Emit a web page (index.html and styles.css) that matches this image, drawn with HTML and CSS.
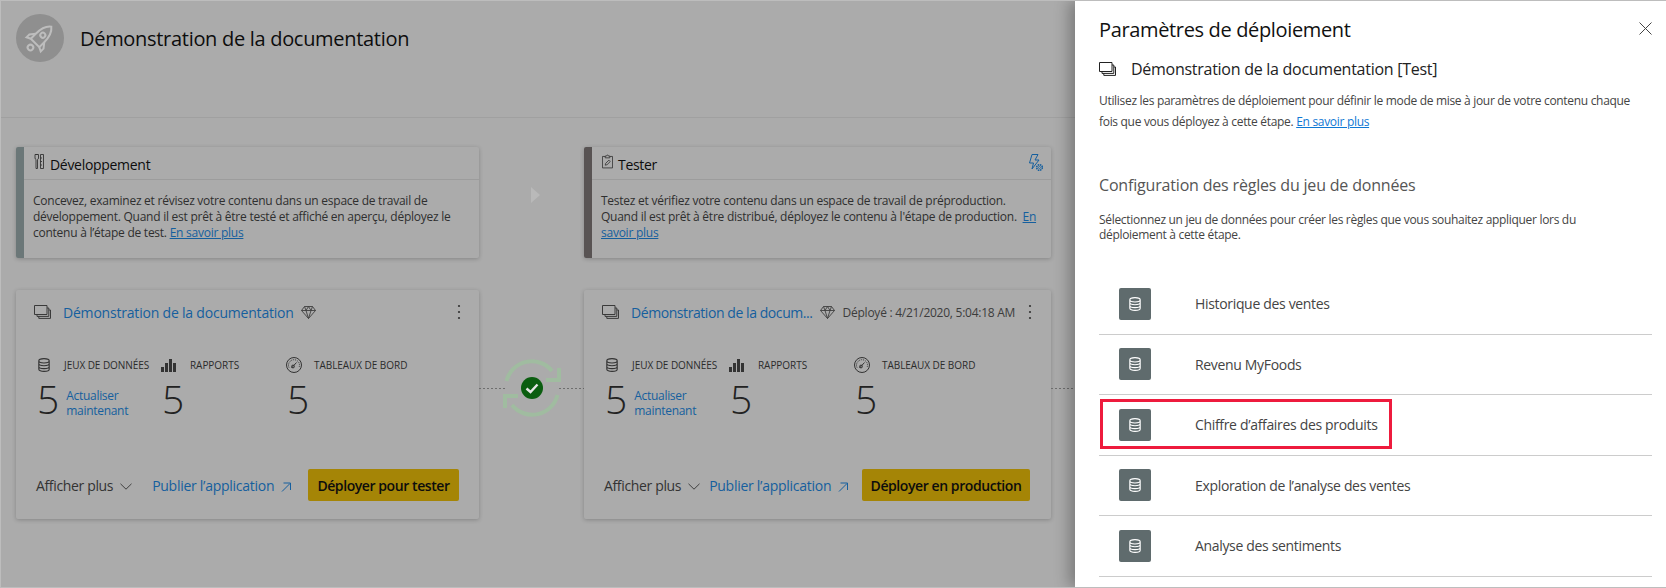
FILE: index.html
```html
<!DOCTYPE html>
<html lang="fr">
<head>
    <meta charset="UTF-8">
    <meta name="viewport" content="width=device-width, initial-scale=1.0">
    <title>Paramètres de déploiement</title>
    <link rel="stylesheet" href="styles.css">
</head>
<body>
    <svg class="sprites" width="0" height="0">
        <symbol id="i-workspace" viewBox="0 0 17 14">
            <path d="M.5.5h12.5v9H.5z M13 3h1.8v8.4H3V9.5 M14.8 5h1.7v8.4H4.8v-2" fill="none" stroke="currentColor"/>
        </symbol>
        <symbol id="i-db" viewBox="0 0 12 14">
            <path d="M.8 2.800C.8 1.500 3 .6 6 .6s5.200.9 5.200 2.200v8.400c0 1.300-2.200 2.200-5.200 2.200S.8 12.500.8 11.200z M.8 2.800C.8 4.100 3 5 6 5s5.200-.9 5.200-2.200 M.8 5.600C.8 6.900 3 7.800 6 7.800s5.200-.9 5.200-2.200 M.8 8.400C.8 9.700 3 10.600 6 10.600s5.200-.9 5.200-2.200" fill="none" stroke="currentColor" stroke-width="1.100"/>
        </symbol>
        <symbol id="i-bars" viewBox="0 0 15 13">
            <path d="M0 8h3v5H0z M4 4h3v9H4z M8 0h3v13H8z M12 4h3v9h-3z" fill="currentColor"/>
        </symbol>
        <symbol id="i-gauge" viewBox="0 0 16 16">
            <circle cx="8" cy="8" r="7.500" fill="none" stroke="currentColor"/>
            <path d="M3 10.500A5.500 5.500 0 1 1 13 10.500" fill="none" stroke="currentColor" stroke-dasharray="1 1"/>
            <path d="M5.500 11L10.500 5.500" stroke="currentColor" fill="none"/>
            <circle cx="7" cy="9.500" r="1.400" fill="none" stroke="currentColor"/>
        </symbol>
        <symbol id="i-gem" viewBox="0 0 15 13">
            <path d="M3.500.5h8l3 4-7 8-7-8z M.5 4.500h14 M5 4.500l2.500 8 2.500-8 M3.500.5L5 4.500 7.500.5 10 4.500 11.500.5" fill="none" stroke="currentColor" stroke-width=".9"/>
        </symbol>
        <symbol id="i-kebab" viewBox="0 0 4 16">
            <circle cx="2" cy="2" r="1.100" fill="currentColor"/>
            <circle cx="2" cy="8" r="1.100" fill="currentColor"/>
            <circle cx="2" cy="14" r="1.100" fill="currentColor"/>
        </symbol>
        <symbol id="i-chevron" viewBox="0 0 12 7">
            <path d="M.5.8L6 6.200 11.500.8" fill="none" stroke="currentColor"/>
        </symbol>
        <symbol id="i-open" viewBox="0 0 10 10">
            <path d="M1 9.500L9 1.500 M2.500 1H9.500V8" fill="none" stroke="currentColor"/>
        </symbol>
        <symbol id="i-sync" viewBox="0 0 54 54" overflow="visible">
            <g fill="none" stroke="#a0bca0" stroke-width="4">
                <path d="M1.500 20A26 26 0 0 1 47 10"/>
                <path d="M41 19H54V7"/>
                <path d="M52.500 34A26 26 0 0 1 7 44"/>
                <path d="M13 35H0V47"/>
            </g>
            <circle cx="27" cy="27" r="11" fill="#0b5e10"/>
            <path d="M21.500 27.500l4 3.500 7-7.500" fill="none" stroke="#e6e6e6" stroke-width="2.400"/>
        </symbol>
    </svg>

    <div class="app">
        <main class="pipeline">
            <header class="pipeline-head">
                <div class="logo">
                    <svg width="48" height="48" viewBox="0 0 48 48">
                        <g transform="rotate(45 24 24)" fill="none" stroke="#bdbdbd" stroke-width="2">
                            <path d="M24 8c4.500 3.500 6 10 6 16v7H18v-7c0-6 1.500-12.500 6-16z"/>
                            <circle cx="24" cy="20" r="2.500"/>
                            <path d="M18 24l-4 5v4l4-2 M30 24l4 5v4l-4-2"/>
                            <circle cx="24" cy="37.500" r="2.800"/>
                        </g>
                    </svg>
                </div>
                <h1>Démonstration de la documentation</h1>
            </header>

            <div class="stages">
                <section class="stage stage-dev">
                    <div class="stage-head">
                        <svg class="stage-icon" width="10" height="15" viewBox="0 0 10 15">
                            <path d="M1 .5v3.500c0 .8.500 1.300 1 1.500v9h1.500v-9c.5-.2 1-.7 1-1.500V.5z M1.500 .5h2.500 M6.500 .5h3v14h-3z M6.500 4h1.500 M6.500 7.500h1.500 M6.500 11h1.500" fill="none" stroke="currentColor" stroke-width=".9"/>
                        </svg>
                        <h2>Développement</h2>
                    </div>
                    <p class="stage-text">Concevez, examinez et révisez votre contenu dans un espace de travail de<br>développement. Quand il est prêt à être testé et affiché en aperçu, déployez le<br>contenu à l’étape de test. <a href="#">En savoir plus</a></p>
                </section>

                <div class="step-arrow"></div>

                <section class="stage stage-test">
                    <div class="stage-head">
                        <svg class="stage-icon" width="11" height="15" viewBox="0 0 12 15">
                            <path d="M3.500 2H.5v12.500h11V2h-3 M3.500 3.500V1.500h1.500a1 1 0 0 1 2 0h1.500v2z M3.500 11.500l.5-2 3.500-3.500 1.500 1.500L5.500 11z" fill="none" stroke="currentColor" stroke-width=".9"/>
                        </svg>
                        <h2>Tester</h2>
                        <svg class="rules-icon" width="16" height="18" viewBox="0 0 16 18">
                            <path d="M5 .5h6L8 6h4L5 15l1.500-6H2.500z" fill="none" stroke="currentColor"/>
                            <circle cx="12.500" cy="13.500" r="2.800" fill="#ababab" stroke="currentColor" stroke-width="1.600" stroke-dasharray="1.500 .7"/>
                            <circle cx="12.500" cy="13.500" r="1" fill="none" stroke="currentColor" stroke-width=".7"/>
                        </svg>
                    </div>
                    <p class="stage-text">Testez et vérifiez votre contenu dans un espace de travail de préproduction.<br>Quand il est prêt à être distribué, déployez le contenu à l'étape de production. &nbsp;<a href="#">En<br>savoir plus</a></p>
                </section>

                <div class="stage-gap"></div>

                <section class="card">
                    <div class="card-head">
                        <svg class="ws-icon" width="17" height="14"><use href="#i-workspace"/></svg>
                        <a class="card-title" href="#">Démonstration de la documentation</a>
                        <svg class="gem" width="15" height="13"><use href="#i-gem"/></svg>
                        <svg class="kebab" width="4" height="16"><use href="#i-kebab"/></svg>
                    </div>
                    <div class="stats">
                        <div class="stat">
                            <div class="stat-label"><span class="stat-icon"><svg width="12" height="14"><use href="#i-db"/></svg></span>JEUX DE DONNÉES</div>
                            <div class="stat-value first">5<a href="#">Actualiser<br>maintenant</a></div>
                        </div>
                        <div class="stat">
                            <div class="stat-label"><span class="stat-icon wide"><svg width="15" height="13"><use href="#i-bars"/></svg></span>RAPPORTS</div>
                            <div class="stat-value">5</div>
                        </div>
                        <div class="stat">
                            <div class="stat-label"><span class="stat-icon mid"><svg width="16" height="16"><use href="#i-gauge"/></svg></span>TABLEAUX DE BORD</div>
                            <div class="stat-value">5</div>
                        </div>
                    </div>
                    <div class="card-foot">
                        <span class="more">Afficher plus<svg width="12" height="7"><use href="#i-chevron"/></svg></span>
                        <a class="publish" href="#">Publier l’application<svg width="10" height="10"><use href="#i-open"/></svg></a>
                        <button class="deploy">Déployer pour tester</button>
                    </div>
                </section>

                <div class="connector">
                    <span class="dots"></span>
                    <svg class="sync" width="54" height="54"><use href="#i-sync"/></svg>
                    <span class="dots"></span>
                </div>

                <section class="card card-test">
                    <div class="card-head">
                        <svg class="ws-icon" width="17" height="14"><use href="#i-workspace"/></svg>
                        <a class="card-title" href="#">Démonstration de la docum...</a>
                        <svg class="gem" width="15" height="13"><use href="#i-gem"/></svg>
                        <span class="deployed">Déployé : 4/21/2020, 5:04:18 AM</span>
                        <svg class="kebab" width="4" height="16"><use href="#i-kebab"/></svg>
                    </div>
                    <div class="stats">
                        <div class="stat">
                            <div class="stat-label"><span class="stat-icon"><svg width="12" height="14"><use href="#i-db"/></svg></span>JEUX DE DONNÉES</div>
                            <div class="stat-value first">5<a href="#">Actualiser<br>maintenant</a></div>
                        </div>
                        <div class="stat">
                            <div class="stat-label"><span class="stat-icon wide"><svg width="15" height="13"><use href="#i-bars"/></svg></span>RAPPORTS</div>
                            <div class="stat-value">5</div>
                        </div>
                        <div class="stat">
                            <div class="stat-label"><span class="stat-icon mid"><svg width="16" height="16"><use href="#i-gauge"/></svg></span>TABLEAUX DE BORD</div>
                            <div class="stat-value">5</div>
                        </div>
                    </div>
                    <div class="card-foot">
                        <span class="more">Afficher plus<svg width="12" height="7"><use href="#i-chevron"/></svg></span>
                        <a class="publish" href="#">Publier l’application<svg width="10" height="10"><use href="#i-open"/></svg></a>
                        <button class="deploy">Déployer en production</button>
                    </div>
                </section>

                <div class="connector tail"><span class="dots"></span></div>
            </div>
        </main>

        <aside class="panel">
            <div class="panel-head">
                <h2>Paramètres de déploiement</h2>
                <svg class="close" width="13" height="13" viewBox="0 0 13 13"><path d="M.5.5l12 12 M12.500.5l-12 12" stroke="currentColor" fill="none"/></svg>
            </div>
            <div class="panel-ws">
                <svg width="17" height="14"><use href="#i-workspace"/></svg>
                <span>Démonstration de la documentation [Test]</span>
            </div>
            <p class="panel-desc">Utilisez les paramètres de déploiement pour définir le mode de mise à jour de votre contenu chaque<br>fois que vous déployez à cette étape. <a href="#">En savoir plus</a></p>
            <h3>Configuration des règles du jeu de données</h3>
            <p class="panel-hint">Sélectionnez un jeu de données pour créer les règles que vous souhaitez appliquer lors du<br>déploiement à cette étape.</p>
            <ul class="datasets">
                <li><span class="ds-icon"><svg width="12" height="14"><use href="#i-db"/></svg></span>Historique des ventes</li>
                <li><span class="ds-icon"><svg width="12" height="14"><use href="#i-db"/></svg></span>Revenu MyFoods</li>
                <li class="marked"><span class="ds-icon"><svg width="12" height="14"><use href="#i-db"/></svg></span>Chiffre d’affaires des produits<span class="callout"></span></li>
                <li><span class="ds-icon"><svg width="12" height="14"><use href="#i-db"/></svg></span>Exploration de l’analyse des ventes</li>
                <li><span class="ds-icon"><svg width="12" height="14"><use href="#i-db"/></svg></span>Analyse des sentiments</li>
            </ul>
        </aside>
    </div>
</body>
</html>
```

FILE: styles.css
```css
* {
    box-sizing: border-box;
}
body {
    margin: 0;
    font-family: "Open Sans", "Noto Sans", sans-serif;
    color: #2b2b2b;
}
a {
    color: #155f9e;
    text-decoration: none;
}
h1, h2, h3, p, ul {
    margin: 0;
    padding: 0;
}
.sprites {
    position: absolute;
}
.app {
    display: flex;
    width: 1666px;
    height: 588px;
    overflow: hidden;
    background: #ababab;
    border: solid #bdbdbd;
    border-width: 1px 0 1px 1px;
}

/* left side, dimmed */
.pipeline {
    width: 1074px;
    flex: none;
    padding-left: 15px;
}
.pipeline-head {
    display: flex;
    align-items: flex-start;
    gap: 16px;
    height: 117px;
    margin-left: -15px;
    padding: 13px 0 0 15px;
    border-bottom: 1px solid #a0a0a0;
}
.logo {
    width: 48px;
    height: 48px;
    border-radius: 50%;
    background: #8f8f8f;
}
.pipeline-head h1 {
    font-size: 20px;
    font-weight: 400;
    line-height: 50px;
    color: #0d0d0d;
    letter-spacing: -0.3px;
}
.stages {
    display: grid;
    grid-template-columns: 463px 105px 467px 24px;
    grid-template-rows: 111px 229px;
    row-gap: 32px;
    margin-top: 29px;
}
.stage {
    border-left: 8px solid #6b7778;
    border-radius: 2px;
    box-shadow: 0 1px 4px rgba(0, 0, 0, .22);
}
.stage-test {
    border-left-color: #585353;
}
.stage-head {
    display: flex;
    align-items: center;
    height: 33px;
    padding: 0 8px 0 10px;
    border-bottom: 1px solid #9c9c9c;
}
.stage-head h2 {
    margin: 2px 0 0 6px;
    font-size: 14px;
    font-weight: 400;
    color: #0d0d0d;
    letter-spacing: -0.3px;
}
.stage-test .stage-head h2 {
    margin-left: 5px;
}
.stage-icon {
    margin-top: -3px;
    color: #333;
}
.rules-icon {
    margin-left: auto;
    color: #155f9e;
}
.stage-text {
    padding: 13px 0 0 9px;
    font-size: 12px;
    line-height: 16px;
    color: #2f2f2f;
    letter-spacing: -0.25px;
    white-space: nowrap;
}
.stage-text a {
    text-decoration: underline;
}
.step-arrow {
    align-self: start;
    justify-self: center;
    width: 0;
    height: 0;
    margin: 40px 0 0 8px;
    border-left: 9px solid #b9b9b9;
    border-top: 8px solid transparent;
    border-bottom: 8px solid transparent;
}
.card {
    display: flex;
    flex-direction: column;
    padding: 14px 20px 18px 18px;
    border-radius: 2px;
    box-shadow: 0 1px 4px rgba(0, 0, 0, .22);
}
.card-test {
    padding-right: 21px;
}
.card-head {
    display: flex;
    align-items: center;
    height: 16px;
}
.ws-icon {
    margin-top: -1px;
    color: #3a3a3a;
    margin-right: 12px;
}
.card-title {
    font-size: 14px;
    font-weight: 400;
    white-space: nowrap;
    letter-spacing: -0.2px;
}
.card-test .card-title {
    letter-spacing: -0.43px;
}
.gem {
    margin-left: 7px;
    color: #3f3f3f;
}
.kebab {
    margin-left: auto;
    margin-right: -2px;
    color: #333;
}
.deployed {
    margin-left: 8px;
    font-size: 12px;
    color: #3c3c3c;
    white-space: nowrap;
    letter-spacing: -0.25px;
}
.stats {
    display: grid;
    grid-template-columns: 123px 125px 1fr;
    margin: 37px 0 0 4px;
}
.stat-label {
    display: flex;
    align-items: center;
    height: 16px;
    font-size: 10px;
    white-space: nowrap;
    color: #2b2b2b;
    letter-spacing: -0.05px;
}
.stat-icon {
    display: flex;
    width: 26px;
    color: #333;
}
.stat-icon.wide {
    width: 29px;
}
.stat-icon.mid {
    width: 28px;
}
.stat-value {
    display: flex;
    margin: 4px 0 0 1px;
    font-size: 39px;
    font-weight: 300;
    line-height: 44px;
    color: #222;
}
.stat-value.first {
    margin-left: -1px;
}
.stat-value a {
    margin: 11px 0 0 7px;
    font-size: 12px;
    font-weight: 400;
    line-height: 15px;
    letter-spacing: -0.3px;
}
.card-foot {
    display: flex;
    align-items: center;
    margin: auto 0 0 2px;
}
.more {
    font-size: 14px;
    color: #333;
    letter-spacing: -0.35px;
}
.more svg {
    margin-left: 7px;
    vertical-align: 1px;
    color: #3f3f3f;
}
.publish {
    margin-left: 20px;
    font-size: 14px;
    letter-spacing: -0.27px;
}
.card-test .publish {
    margin-left: 9px;
}
.publish svg {
    margin-left: 7px;
    vertical-align: -1px;
}
.deploy {
    margin-left: auto;
    width: 151px;
    height: 32px;
    padding: 0;
    border: none;
    border-radius: 2px;
    background: #a58506;
    color: #0d0d0d;
    font-family: inherit;
    font-size: 14px;
    font-weight: 600;
    letter-spacing: -0.42px;
    white-space: nowrap;
}
.card-test .deploy {
    width: 168px;
}
.connector {
    display: flex;
    align-items: center;
    align-self: start;
    height: 54px;
    margin-top: 71px;
}
.sync {
    overflow: visible;
}
.dots {
    flex: 1;
    height: 1px;
    background: linear-gradient(90deg, #6e6e6e 2px, transparent 2px) 0 0 / 4px 1px;
}

/* settings panel */
.panel {
    position: relative;
    flex: 1;
    padding: 14px 14px 0 24px;
    background: #fff;
    box-shadow: -6px 0 14px rgba(0, 0, 0, .28);
}
.panel-head {
    display: flex;
    align-items: center;
    justify-content: space-between;
    height: 28px;
}
.panel-head h2 {
    font-size: 20px;
    font-weight: 500;
    color: #111;
    letter-spacing: -0.35px;
}
.close {
    margin-top: -2px;
    color: #444;
}
.panel-ws {
    display: flex;
    align-items: center;
    gap: 15px;
    height: 24px;
    margin-top: 14px;
    font-size: 16px;
    color: #222;
    letter-spacing: -0.27px;
}
.panel-desc {
    margin-top: 9px;
    font-size: 12px;
    line-height: 21px;
    color: #444;
    letter-spacing: -0.31px;
}
.panel-desc a {
    color: #0f78d4;
    text-decoration: underline;
}
.panel h3 {
    margin-top: 41px;
    font-size: 16px;
    font-weight: 400;
    line-height: 24px;
    color: #555;
    letter-spacing: -0.18px;
}
.panel-hint {
    margin-top: 15px;
    font-size: 12px;
    line-height: 15px;
    color: #444;
    letter-spacing: -0.31px;
}
.datasets {
    margin-top: 32px;
    list-style: none;
    font-size: 14px;
    color: #444;
    letter-spacing: -0.33px;
}
.datasets li {
    position: relative;
    display: flex;
    align-items: center;
    height: 60.500px;
    padding-left: 20px;
    border-bottom: 1px solid #ccc;
}
.ds-icon {
    display: flex;
    align-items: center;
    justify-content: center;
    width: 32px;
    height: 32px;
    margin-right: 44px;
    border-radius: 2px;
    background: #5f6b6d;
    color: #fff;
}
.callout {
    position: absolute;
    left: 1px;
    top: 4px;
    width: 292px;
    height: 50px;
    border: 3px solid #ee1b3d;
}
```
